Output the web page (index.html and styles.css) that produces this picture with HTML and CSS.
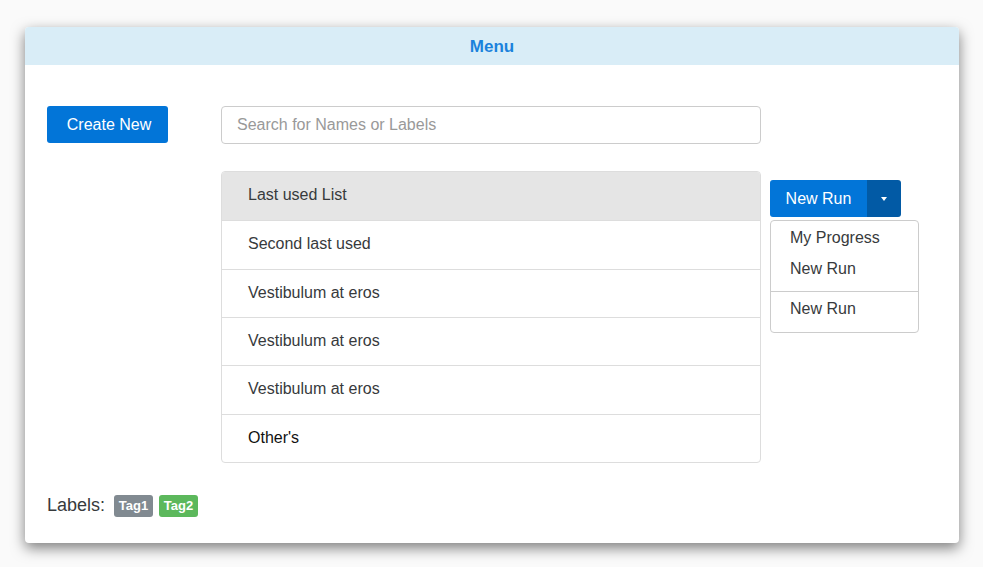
FILE: index.html
```html
<!DOCTYPE html>
<html>
<head>
<meta charset="utf-8">
<link rel="stylesheet" href="styles.css">
</head>
<body>
<div class="card">
  <div class="card-header">Menu</div>
  <div class="card-body">
    <div class="top-row">
      <button class="btn btn-primary create">Create New</button>
      <input class="search" type="text" placeholder="Search for Names or Labels">
    </div>
    <div class="mid-row">
      <ul class="list">
        <li class="active">Last used List</li>
        <li>Second last used</li>
        <li>Vestibulum at eros</li>
        <li>Vestibulum at eros</li>
        <li>Vestibulum at eros</li>
        <li class="other">Other's</li>
      </ul>
      <div class="split">
        <div class="btn-group">
          <button class="btn btn-primary run">New Run</button>
          <button class="btn btn-primary toggle"><span class="caret"></span></button>
        </div>
        <div class="dropdown">
          <div class="dd-item">My Progress</div>
          <div class="dd-item">New Run</div>
          <div class="dd-divider"></div>
          <div class="dd-item">New Run</div>
        </div>
      </div>
    </div>
    <div class="labels">
      <span class="labels-text">Labels:</span>
      <span class="tag tag-grey">Tag1</span>
      <span class="tag tag-green">Tag2</span>
    </div>
  </div>
</div>
</body>
</html>
```
FILE: styles.css
```css
html, body {
  margin: 0;
  padding: 0;
  background: #fafafa;
  font-family: "Liberation Sans", Arial, sans-serif;
  color: #373a3c;
}
body {
  padding: 27px 24px 0 25px;
  min-height: 567px;
  box-sizing: border-box;
}
.card {
  width: 934px;
  height: 516px;
  background: #fff;
  border-radius: 4px;
  box-shadow: 0 5px 14px rgba(0, 0, 0, 0.5);
  overflow: hidden;
  box-sizing: border-box;
}
.card-header {
  height: 38px;
  background: #d9edf7;
  color: #1b82dc;
  font-weight: bold;
  font-size: 17px;
  text-align: center;
  line-height: 39px;
}
.card-body {
  padding: 41px 22px 0 22px;
}
.btn {
  font-family: inherit;
  font-size: 16px;
  border: none;
  cursor: pointer;
  color: #fff;
}
.btn-primary {
  background: #0275d8;
}
.top-row {
  display: flex;
  align-items: flex-start;
}
.create {
  width: 121px;
  height: 37px;
  border-radius: 3px;
  padding: 0 0 0 3px;
}
.search {
  margin-left: 53px;
  width: 540px;
  height: 38px;
  box-sizing: border-box;
  border: 1px solid #ccc;
  border-radius: 4px;
  padding: 0 15px;
  font-family: inherit;
  font-size: 16px;
  color: #55595c;
}
.search::placeholder {
  color: #999;
}
.mid-row {
  display: flex;
  align-items: flex-start;
  margin-top: 27px;
  margin-left: 174px;
}
.list {
  list-style: none;
  margin: 0;
  padding: 0;
  width: 540px;
  border: 1px solid #ddd;
  border-radius: 4px;
  box-sizing: border-box;
  overflow: hidden;
}
.list li {
  box-sizing: border-box;
  height: 48.33px;
  line-height: 46px;
  padding-left: 26px;
  font-size: 16px;
  color: #373a3c;
  border-top: 1px solid #ddd;
}
.list li:first-child {
  border-top: none;
}
.list li.active {
  background: #e5e5e5;
}
.list li.other {
  color: #111;
}
.split {
  margin-left: 9px;
  margin-top: 9px;
}
.btn-group {
  display: flex;
  height: 37px;
}
.run {
  width: 97px;
  height: 37px;
  border-radius: 3px 0 0 3px;
  padding: 0;
}
.toggle {
  width: 34px;
  height: 37px;
  background: #025aa5;
  border-radius: 0 3px 3px 0;
  padding: 0;
  display: flex;
  align-items: center;
  justify-content: center;
}
.caret {
  width: 0;
  height: 0;
  border-left: 3px solid transparent;
  border-right: 3px solid transparent;
  border-top: 4px solid #fff;
}
.dropdown {
  margin-top: 3px;
  width: 149px;
  box-sizing: border-box;
  border: 1px solid #ccc;
  border-radius: 4px;
  padding: 1px 0 8px;
  background: #fff;
}
.dd-item {
  padding: 0 19px;
  font-size: 16px;
  line-height: 31px;
  color: #373a3c;
}
.dd-divider {
  height: 1px;
  background: #ccc;
  margin: 7px 0 1px;
}
.labels {
  display: flex;
  align-items: center;
  margin-top: 32px;
}
.labels-text {
  font-size: 18px;
  color: #373a3c;
  margin-right: 9px;
}
.tag {
  display: inline-block;
  font-size: 13px;
  font-weight: bold;
  color: #fff;
  height: 22px;
  line-height: 22px;
  width: 39px;
  text-align: center;
  border-radius: 3px;
  margin-right: 6px;
}
.tag-grey {
  background: #818a91;
}
.tag-green {
  background: #5cb85c;
}
```
